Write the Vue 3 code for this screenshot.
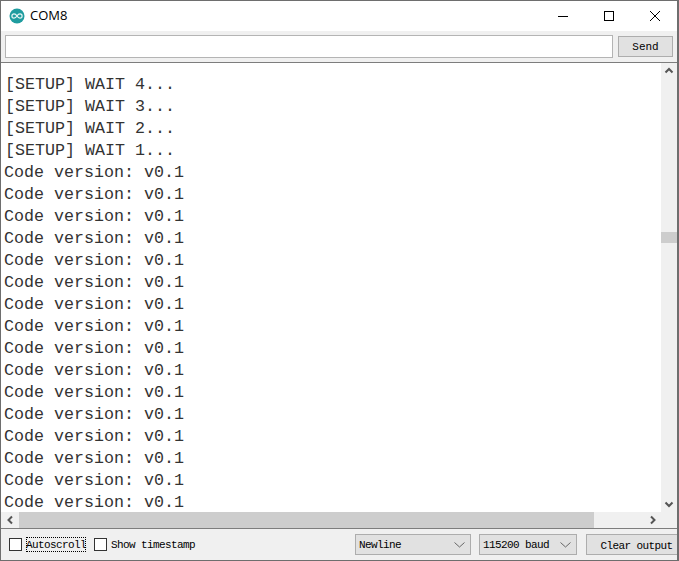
<script setup>
const lines = ['[SETUP] WAIT 4...', '[SETUP] WAIT 3...', '[SETUP] WAIT 2...', '[SETUP] WAIT 1...']
const codeLines = Array.from({ length: 16 }, () => 'Code version: v0.1')
</script>

<template>
  <div class="window">
    <header class="titlebar">
      <svg class="logo" width="16" height="16" viewBox="0 0 16 16">
        <circle cx="8" cy="8" r="7.5" fill="#1f9c9f" />
        <path d="M8 8C7 6.3 6.1 5.9 5 5.9a2.1 2.1 0 0 0 0 4.2C6.1 10.1 7 9.7 8 8C9 6.3 9.9 5.9 11 5.9a2.1 2.1 0 0 1 0 4.2C9.9 10.1 9 9.7 8 8Z" fill="none" stroke="#e6f5f5" stroke-width="1.2" />
      </svg>
      <span class="title">COM8</span>
      <div class="controls">
        <svg width="46" height="30" viewBox="0 0 46 30"><path d="M18 15.5H28" stroke="#000" fill="none" /></svg>
        <svg width="46" height="30" viewBox="0 0 46 30"><rect x="18.5" y="10.5" width="9" height="9" stroke="#000" fill="none" /></svg>
        <svg width="46" height="30" viewBox="0 0 46 30"><path d="M18 10L28 20M28 10L18 20" stroke="#000" fill="none" /></svg>
      </div>
    </header>

    <div class="sendbar">
      <input class="sendinput" type="text" />
      <button class="btn send">Send</button>
    </div>

    <main class="monitor">
      <div class="output">
        <div v-for="(l, i) in lines" :key="'s' + i" class="line setup">{{ l }}</div>
        <div v-for="(l, i) in codeLines" :key="'c' + i" class="line">{{ l }}</div>
      </div>
      <div class="vbar">
        <svg class="arrow" width="16" height="16" viewBox="0 0 16 16"><path d="M4.5 9.5L8 6L11.500 9.500" stroke="#555" stroke-width="2" fill="none" /></svg>
        <div class="vtrack"><div class="vthumb"></div></div>
        <svg class="arrow" width="16" height="16" viewBox="0 0 16 16"><path d="M4.500 6.500L8 10L11.500 6.500" stroke="#555" stroke-width="2" fill="none" /></svg>
      </div>
      <div class="hbar">
        <svg class="arrow" width="18" height="16" viewBox="0 0 18 16"><path d="M11 4.500L7.500 8L11 11.500" stroke="#555" stroke-width="2" fill="none" /></svg>
        <div class="htrack"><div class="hthumb"></div></div>
        <svg class="arrow" width="17" height="16" viewBox="0 0 17 16"><path d="M7 4.500L10.500 8L7 11.500" stroke="#555" stroke-width="2" fill="none" /></svg>
      </div>
      <div class="corner"></div>
    </main>

    <footer class="footer">
      <label class="check autoscroll"><span class="box"></span><span class="text focus">Autoscroll</span></label>
      <label class="check stamp"><span class="box"></span><span class="text">Show timestamp</span></label>
      <div class="select newline"><span class="text">Newline</span><svg width="11" height="6" viewBox="0 0 11 6"><path d="M0.500 0.500L5.500 5L10.500 0.500" stroke="#666" fill="none" /></svg></div>
      <div class="select baud"><span class="text">115200 baud</span><svg width="11" height="6" viewBox="0 0 11 6"><path d="M0.500 0.500L5.500 5L10.500 0.500" stroke="#666" fill="none" /></svg></div>
      <button class="btn clear">Clear output</button>
    </footer>
  </div>
</template>

<style>
html, body { margin: 0; background: #f0f0f0; }
</style>

<style scoped>
.window {
  width: 679px;
  height: 561px;
  box-sizing: border-box;
  border: 1px solid #6e6e6e;
  border-right-width: 2px;
  display: flex;
  flex-direction: column;
  overflow: hidden;
  background: #f0f0f0;
}
.titlebar {
  height: 30px;
  flex: none;
  background: #fff;
  display: flex;
  align-items: center;
  padding-left: 8px;
}
.logo { flex: none; margin-bottom: 1px; }
.title {
  margin: 0 0 2px 5px;
  font: 13px "Open Sans", "Noto Sans", sans-serif;
  color: #000;
}
.controls { margin-left: auto; display: flex; margin-right: -1px; }
.sendbar {
  height: 31px;
  flex: none;
  display: flex;
  align-items: flex-start;
  padding: 4px 0 0 4px;
  box-sizing: border-box;
}
.sendinput {
  width: 608px;
  height: 23px;
  box-sizing: border-box;
  border: 1px solid #b4b4b4;
  background: #fff;
  padding: 0;
  margin: 0;
  outline: none;
}
.btn {
  box-sizing: border-box;
  border: 1px solid #adadad;
  background: #e1e1e1;
  color: #000;
  font: 11px "Liberation Mono", monospace;
  letter-spacing: -0.6px;
  padding: 0;
  margin: 0;
}
.send { width: 55px; height: 21px; margin: 1px 0 0 5px; letter-spacing: 0; }
.monitor {
  height: 465px;
  flex: none;
  border-top: 1px solid #7d7d7d;
  border-bottom: 1px solid #7d7d7d;
  display: grid;
  grid-template-columns: 1fr 16px;
  grid-template-rows: 1fr 16px;
  background: #fff;
  min-height: 0;
}
.output {
  overflow: hidden;
  min-height: 0;
  padding: 11px 0 0 3px;
  font: 16.667px/22px "Liberation Mono", monospace;
  color: #333;
  white-space: pre;
}
.line { height: 22px; }
.setup { margin-left: 1px; }
.vbar, .hbar, .corner { background: #f0f0f0; }
.vbar { display: flex; flex-direction: column; min-height: 0; }
.arrow { flex: none; display: block; }
.vtrack { flex: 1; padding-top: 153px; }
.vthumb { height: 11px; background: #cdcdcd; }
.hbar { display: flex; background: #f0f0f0; }
.htrack { flex: 1; }
.hthumb { width: 575px; height: 16px; background: #cdcdcd; }
.footer {
  flex: 1;
  display: flex;
  align-items: center;
  font: 11px "Liberation Mono", monospace;
  letter-spacing: -0.6px;
  color: #000;
  white-space: nowrap;
}
.check { display: flex; align-items: center; flex: none; }
.autoscroll { margin-left: 8px; }
.stamp { margin-left: 8px; }
.box {
  width: 11px;
  height: 11px;
  border: 1px solid #333;
  background: #fff;
  margin-right: 4px;
  flex: none;
}
.text { padding-top: 2px; line-height: 13px; }
.focus { outline: 1px dotted #000; outline-offset: -1px; }
.select {
  box-sizing: border-box;
  flex: none;
  height: 21px;
  border: 1px solid #adadad;
  background: #e1e1e1;
  display: flex;
  align-items: center;
  justify-content: space-between;
  padding: 0 2px 0 3px;
}
.select svg { margin-right: 3px; }
.newline { width: 116px; margin-left: 160px; }
.baud { width: 98px; margin-left: 8px; }
.clear { width: 95px; height: 21px; margin-left: 9px; flex: none; text-align: center; padding: 2px 0 0 6px; }
</style>
